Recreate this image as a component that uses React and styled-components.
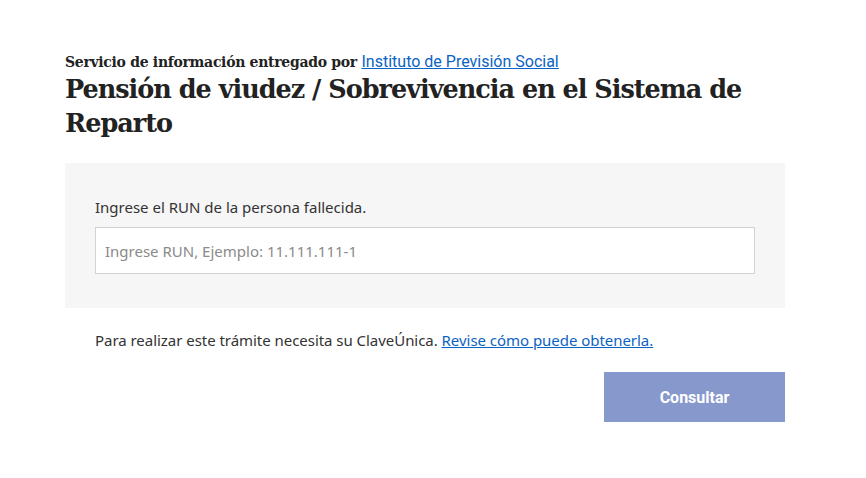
import React from "react";
import styled, { createGlobalStyle } from "styled-components";

const Global = createGlobalStyle`
  html, body { margin: 0; padding: 0; background: #fff; }
  body { font-family: "Noto Sans", "Open Sans", sans-serif; color: #333; }
`;

const Page = styled.main`
  width: 720px;
  margin-left: 65px;
  padding-top: 52px;
`;

const Provider = styled.div`
  font-family: "DejaVu Serif", serif;
  font-weight: 700;
  font-size: 14px;
  letter-spacing: -0.3px;
  color: #222;
  line-height: 20px;
`;

const ProviderLink = styled.a`
  font-family: "Roboto", sans-serif;
  font-weight: 400;
  font-size: 16px;
  letter-spacing: 0;
  color: #0b63c5;
  text-decoration: underline;
`;

const Title = styled.h1`
  margin: 0 0 23px;
  font-family: "DejaVu Serif", serif;
  font-weight: 700;
  font-size: 25.5px;
  letter-spacing: -1px;
  line-height: 34px;
  color: #222;
`;

const Panel = styled.section`
  background: #f6f6f6;
  padding: 34px 30px 34px;
  display: flex;
  flex-direction: column;
  gap: 10px;
`;

const Label = styled.label`
  font-size: 15px;
  line-height: 20px;
  color: #333;
`;

const Input = styled.input`
  box-sizing: border-box;
  width: 100%;
  height: 47px;
  border: 1px solid #d2d2d2;
  background: #fff;
  padding: 0 9px;
  font-family: "Noto Sans", sans-serif;
  font-size: 15px;
  color: #333;
  outline: none;
  &::placeholder { color: #8a8a8a; }
`;

const Note = styled.p`
  margin: 22px 0 0;
  padding: 0 30px;
  font-size: 15px;
  letter-spacing: -0.04px;
  line-height: 20px;
  color: #333;
`;

const NoteLink = styled.a`
  color: #0b63c5;
  text-decoration: underline;
`;

const Actions = styled.div`
  display: flex;
  justify-content: flex-end;
  margin-top: 22px;
`;

const Button = styled.button`
  width: 181px;
  height: 50px;
  border: 0;
  background: #8798cd;
  color: #fff;
  font-family: "Roboto", sans-serif;
  font-weight: 700;
  font-size: 16px;
  cursor: pointer;
`;

export default function App() {
  return (
    <>
      <Global />
      <Page>
        <Provider>
          Servicio de información entregado por{" "}
          <ProviderLink href="#">Instituto de Previsión Social</ProviderLink>
        </Provider>
        <Title>Pensión de viudez / Sobrevivencia en el Sistema de Reparto</Title>
        <Panel>
          <Label htmlFor="run">Ingrese el RUN de la persona fallecida.</Label>
          <Input id="run" placeholder="Ingrese RUN, Ejemplo: 11.111.111-1" />
        </Panel>
        <Note>
          Para realizar este trámite necesita su ClaveÚnica.{" "}
          <NoteLink href="#">Revise cómo puede obtenerla.</NoteLink>
        </Note>
        <Actions>
          <Button>Consultar</Button>
        </Actions>
      </Page>
    </>
  );
}
